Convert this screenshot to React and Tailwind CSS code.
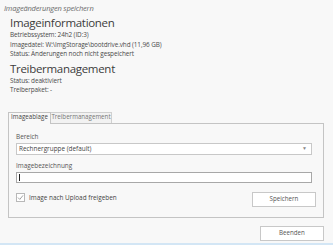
export default function App() {
  const font = { fontFamily: '"Open Sans", "Noto Sans", sans-serif' };
  return (
    <div
      className="w-[333px] h-[245px] bg-[#f8f8f8] flex flex-col text-[#4a4a4a] overflow-hidden"
      style={font}
    >
      <div className="pl-[4px] pt-[3px] h-[14px] text-[7.5px] leading-[10px] italic text-[#6b6b6b] tracking-[-0.2px]">
        Imageänderungen speichern
      </div>
      <div className="pl-[10px] pt-[2px]">
        <div className="text-[11.5px] leading-[14px] text-[#3c3c3c] tracking-[-0.3px]">Imageinformationen</div>
        <div className="text-[6.4px] leading-[9.5px] tracking-[-0.1px]">
          <div>Betriebssystem: 24h2 (ID:3)</div>
          <div>Imagedatei: W:\ImgStorage\bootdrive.vhd (11,96 GB)</div>
          <div>Status: Änderungen noch nicht gespeichert</div>
        </div>
        <div className="mt-[3px] text-[11.5px] leading-[14px] text-[#3c3c3c] tracking-[-0.3px]">Treibermanagement</div>
        <div className="text-[6.4px] leading-[9.5px] tracking-[-0.1px]">
          <div>Status: deaktiviert</div>
          <div>Treiberpaket: -</div>
        </div>
      </div>
      <div className="mt-[16px] mx-[8px] w-[316px] flex flex-col">
        <div className="flex items-end h-[12px] text-[6.2px] leading-none">
          <div className="relative z-10 h-[12px] w-[43px] flex items-center justify-center border border-b-0 border-[#c4c4c4] bg-[#f8f8f8] text-[#444] -mb-px pb-px">
            Imageablage
          </div>
          <div className="h-[11px] w-[61px] flex items-center justify-center border border-l-0 border-b-0 border-[#d0d0d0] bg-[#f2f2f2] text-[#777]">
            Treibermanagement
          </div>
        </div>
        <div className="h-[95px] border border-[#c4c4c4] flex flex-col px-[7px] pt-[9px]">
          <div className="text-[6.4px] leading-[8px] text-[#555]">Bereich</div>
          <div className="mt-[2px] h-[12px] w-[296px] bg-white border border-[#c8c8c8] flex items-center justify-between pl-[2px] pr-[4px] text-[6.4px] text-[#444]">
            <span>Rechnergruppe (default)</span>
            <span className="text-[5px] text-[#888]">▼</span>
          </div>
          <div className="mt-[7px] text-[6.4px] leading-[8px] text-[#555]">Imagebezeichnung</div>
          <div className="mt-[2px] h-[11px] w-[296px] bg-white border border-[#a8a8a8] flex items-center pl-[2px]">
            <div className="w-px h-[7px] bg-[#222]" />
          </div>
          <div className="mt-[9px] flex items-start justify-between">
            <div className="flex items-center gap-[4px] mt-px">
              <div className="w-[9px] h-[9px] border border-[#b8b8b8] bg-white flex items-center justify-center">
                <svg width="7" height="7" viewBox="0 0 7 7">
                  <path d="M1 3.6 L2.8 5.4 L6 1.4" fill="none" stroke="#8a8a8a" strokeWidth="0.8" />
                </svg>
              </div>
              <span className="text-[6.4px] text-[#444]">Image nach Upload freigeben</span>
            </div>
            <div className="w-[64px] h-[15px] border border-[#c8c8c8] bg-white flex items-center justify-center text-[6.2px] text-[#555]">
              Speichern
            </div>
          </div>
        </div>
      </div>
      <div className="mt-[8px] mr-[9px] flex justify-end">
        <div className="w-[64px] h-[15px] border border-[#c8c8c8] bg-white flex items-center justify-center text-[6.2px] text-[#555]">
          Beenden
        </div>
      </div>
      <div className="mt-auto h-[2px] bg-[#d3e6f5]" />
    </div>
  );
}
